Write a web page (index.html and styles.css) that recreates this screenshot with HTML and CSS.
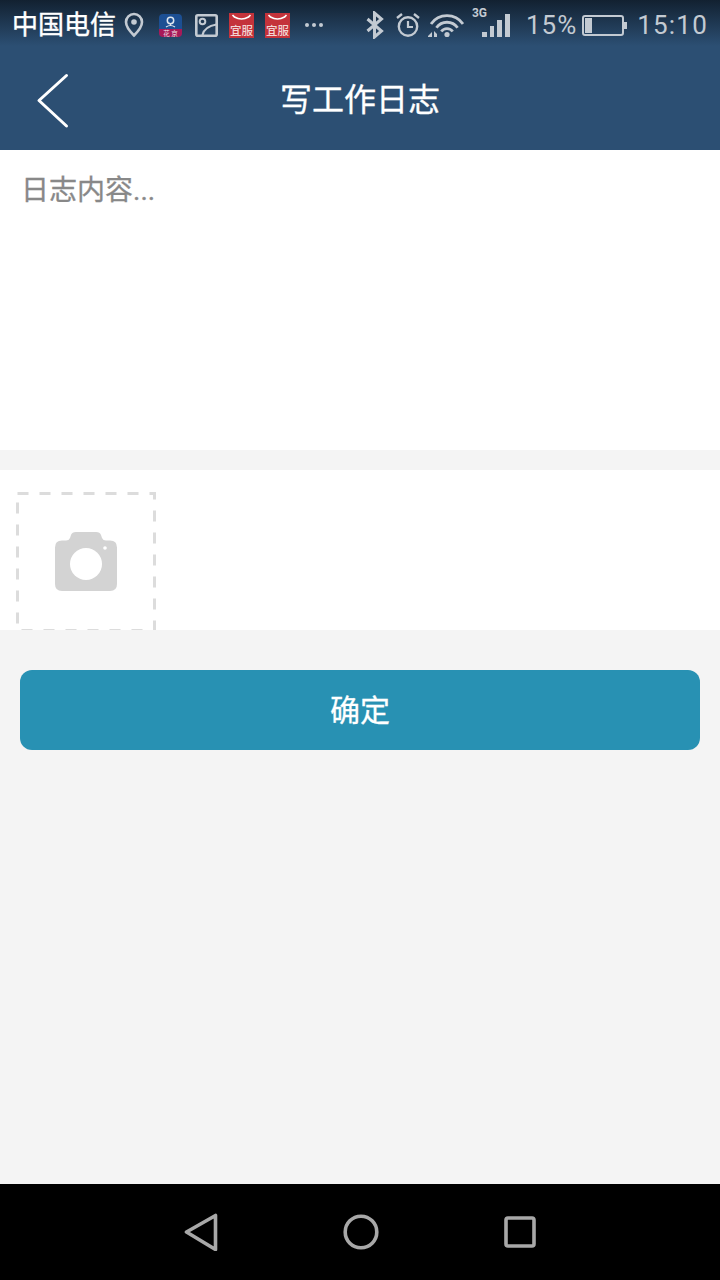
FILE: index.html
```html
<!DOCTYPE html>
<html lang="zh-CN">
<head>
  <meta charset="UTF-8" />
  <title>写工作日志</title>
  <link rel="stylesheet" href="styles.css">
</head>
<body>
  <div class="screen">
    <header class="top">
      <div class="status">
        <div class="status-left">
          <span class="carrier">中国电信</span>
          <svg class="ic-pin" width="20" height="26" viewBox="0 0 20 26"><path d="M10 2a8 8 0 0 0-8 8c0 5.500 8 13.500 8 13.500s8-8 8-13.500a8 8 0 0 0-8-8z" fill="none" stroke="#c3cad2" stroke-width="2.600"/><circle cx="10" cy="10" r="2.800" fill="#c3cad2"/></svg>
          <svg class="ic-app" width="23" height="23" viewBox="0 0 23 23"><rect width="23" height="23" rx="4" fill="#1c4f93"/><path d="M0 15h23v4a4 4 0 0 1-4 4H4a4 4 0 0 1-4-4z" fill="#a81a58"/><circle cx="11.500" cy="6.500" r="3.200" fill="none" stroke="#dfe6ee" stroke-width="1.500"/><path d="M7 13q4.500-3 9 0M11.500 9.500v2.500" fill="none" stroke="#dfe6ee" stroke-width="1.200"/><text x="11.500" y="21.500" class="app-label">花 京</text></svg>
          <svg class="ic-img" width="23" height="23" viewBox="0 0 23 23"><rect x="1.300" y="1.300" width="20.400" height="20.400" rx="1.500" fill="none" stroke="#c3cad2" stroke-width="2.600"/><circle cx="7.500" cy="7.500" r="2.800" fill="none" stroke="#c3cad2" stroke-width="2"/><path d="M7.500 21q2-8.500 14-10.500" fill="none" stroke="#c3cad2" stroke-width="2.200"/></svg>
          <span class="shop"><svg width="25" height="12" viewBox="0 0 25 12"><path d="M3.500 2q1 1 2 2 7 4 14 0 1-1 2-2" fill="none" stroke="#fff" stroke-width="1.700"/></svg><i>宜服</i></span>
          <span class="shop"><svg width="25" height="12" viewBox="0 0 25 12"><path d="M3.500 2q1 1 2 2 7 4 14 0 1-1 2-2" fill="none" stroke="#fff" stroke-width="1.700"/></svg><i>宜服</i></span>
          <span class="more"><b></b><b></b><b></b></span>
        </div>
        <div class="status-right">
          <svg class="ic-bt" width="20" height="28" viewBox="0 0 20 28"><path d="M2.500 8l14 12L9.500 26V2l7 6-14 12" fill="none" stroke="#c3cad2" stroke-width="3"/></svg>
          <svg class="ic-alarm" width="26" height="26" viewBox="0 0 26 26"><circle cx="13" cy="14.500" r="9.200" fill="none" stroke="#c3cad2" stroke-width="2.400"/><path d="M13 9v6h5" fill="none" stroke="#c3cad2" stroke-width="2.200"/><path d="M2 6l5-4M24 6l-5-4" stroke="#c3cad2" stroke-width="2.400"/></svg>
          <svg class="ic-wifi" width="36" height="26" viewBox="0 0 36 26"><path d="M3 12A19.500 19.500 0 0 1 35 12M8.400 15.700A13 13 0 0 1 29.600 15.700M13.300 19.500A7 7 0 0 1 24.700 19.500" fill="none" stroke="#c3cad2" stroke-width="2.800"/><circle cx="19" cy="22.500" r="2.600" fill="#c3cad2"/><path d="M0 24l4-4v5H0zM6 19l3 3v3H6z" fill="#c3cad2"/></svg>
          <span class="signal">
            <em>3G</em>
            <b class="b1"></b><b class="b2"></b><b class="b3"></b><b class="b4"></b>
          </span>
          <span class="pct">15%</span>
          <span class="battery"><span class="level"></span></span>
          <span class="clock">15:10</span>
        </div>
      </div>
      <div class="titlebar">
        <svg class="back" width="38" height="56" viewBox="0 0 38 56"><path d="M33.500 2.500L6 27.500 33.500 53" fill="none" stroke="#fff" stroke-width="3" stroke-linecap="round" stroke-linejoin="round"/></svg>
        <h1>写工作日志</h1>
      </div>
    </header>

    <main class="content">
      <div class="log-text">日志内容...</div>
      <div class="photos">
        <div class="add-photo">
          <svg class="dash" width="140" height="140" viewBox="0 0 140 140"><rect x="1.500" y="1.500" width="137" height="137" fill="none" stroke="#dcdcdc" stroke-width="3" stroke-dasharray="11 11"/></svg>
          <svg class="camera" width="62" height="60" viewBox="0 0 62 60"><path d="M7 8.500h4q3 0 4-2.500l1-3q1-3 5-3h20q4 0 5 3l1 3q1 2.500 4 2.500h4q7 0 7 7V52q0 7-7 7H7q-7 0-7-7V15.500q0-7 7-7z" fill="#d3d3d3"/><circle cx="31" cy="32" r="16" fill="#fff"/><circle cx="50" cy="16" r="1.800" fill="#fff"/></svg>
        </div>
      </div>
      <div class="actions">
        <button class="ok">确定</button>
      </div>
    </main>

    <nav class="navbar">
      <svg width="34" height="38" viewBox="0 0 34 38"><path d="M2.500 19L31.500 2.500v34z" fill="none" stroke="#a8a8a8" stroke-width="3.600" stroke-linejoin="round"/></svg>
      <svg width="36" height="36" viewBox="0 0 36 36"><circle cx="18" cy="18" r="15.800" fill="none" stroke="#a8a8a8" stroke-width="3.600"/></svg>
      <svg width="32" height="32" viewBox="0 0 32 32"><rect x="2" y="2" width="28" height="28" rx="2" fill="none" stroke="#a8a8a8" stroke-width="3.600"/></svg>
    </nav>
  </div>
</body>
</html>
```

FILE: styles.css
```css
* {
  box-sizing: border-box;
}

body {
  margin: 0;
  background: #f4f4f4;
  font-family: "Roboto", "Noto Sans CJK SC", sans-serif;
}

.screen {
  width: 720px;
  height: 1280px;
  display: flex;
  flex-direction: column;
  overflow: hidden;
}

.top {
  height: 150px;
  background: linear-gradient(#122131 0, #2c4f73 46px, #2c4f73 100%);
}

.status {
  height: 50px;
  display: flex;
  justify-content: space-between;
  align-items: center;
  padding: 0 12px 0 12px;
  color: #c3cad2;
}

.status-left, .status-right {
  display: flex;
  align-items: center;
}

.carrier {
  width: 112px;
  font-size: 26px;
  color: #fff;
  -webkit-text-stroke: 0.4px #fff;
  margin-bottom: 6px;
  white-space: nowrap;
}

.app-label {
  font-size: 6.500px;
  fill: #f0e6ec;
  text-anchor: middle;
}

.ic-app {
  margin-left: 15px;
}

.ic-img {
  margin-left: 13px;
}

.shop {
  width: 25px;
  height: 25px;
  margin-left: 11px;
  background: #c4333b;
  color: #f1d5d5;
  display: flex;
  flex-direction: column;
  align-items: center;
  overflow: hidden;
}

.shop svg {
  flex: none;
}

.shop i {
  font-style: normal;
  font-weight: 500;
  font-size: 11.500px;
  line-height: 12px;
}

.more {
  display: flex;
  gap: 3px;
  margin-left: 15px;
}

.more b {
  width: 4px;
  height: 4px;
  border-radius: 50%;
  background: #c3cad2;
}

.ic-bt {
  margin-right: 10px;
}

.ic-alarm {
  margin-right: 7px;
}

.ic-wifi {
  margin-right: 8px;
}

.signal {
  width: 38px;
  height: 30px;
  display: flex;
  align-items: flex-end;
  gap: 3px;
  position: relative;
  padding-left: 10px;
  margin-bottom: 7px;
}

.signal em {
  position: absolute;
  left: 0;
  top: -1px;
  font-style: normal;
  font-weight: 700;
  font-size: 12px;
  line-height: 14px;
}

.signal b {
  width: 5px;
  background: #c3cad2;
}

.b1 { height: 5px; }
.b2 { height: 11px; }
.b3 { height: 17px; }
.b4 { height: 23px; }

.pct {
  font-size: 26px;
  margin-left: 16px;
  letter-spacing: 1px;
}

.battery {
  width: 42px;
  height: 21px;
  margin-left: 5px;
  margin-right: 3px;
  border: 2px solid #c3cad2;
  border-radius: 3px;
  padding: 1px;
  position: relative;
}

.battery::after {
  content: "";
  position: absolute;
  right: -5px;
  top: 5px;
  width: 3px;
  height: 7px;
  background: #c3cad2;
}

.level {
  display: block;
  width: 7px;
  height: 100%;
  background: #c3cad2;
}

.clock {
  font-size: 26px;
  margin-left: 10px;
  letter-spacing: 1.200px;
}

.titlebar {
  height: 100px;
  display: flex;
  align-items: center;
  justify-content: center;
  position: relative;
}

.back {
  position: absolute;
  left: 33px;
  top: 23px;
}

h1 {
  margin: 0 0 6px;
  font-size: 32px;
  font-weight: 400;
  -webkit-text-stroke: 0.3px #fff;
  color: #fff;
}

.content {
  flex: 1;
}

.log-text {
  height: 300px;
  background: #fff;
  padding: 20px 21px;
  font-size: 28px;
  -webkit-text-stroke: 0.3px #888;
  line-height: 42px;
  color: #888;
}

.photos {
  height: 160px;
  margin-top: 20px;
  background: #fff;
  padding: 22px 16px 0;
  overflow: hidden;
}

.add-photo {
  width: 140px;
  height: 138px;
  position: relative;
  display: flex;
  align-items: center;
  justify-content: center;
}

.dash {
  position: absolute;
  left: 0;
  top: 0;
}

.camera {
  margin-top: 2px;
}

.actions {
  padding: 40px 20px 0;
}

.ok {
  display: block;
  width: 100%;
  height: 80px;
  border: none;
  border-radius: 12px;
  background: #2891b3;
  color: #fff;
  -webkit-text-stroke: 0.3px #fff;
  font-family: inherit;
  font-size: 30px;
  padding: 0 0 4px;
}

.navbar {
  height: 96px;
  background: #000;
  display: flex;
  align-items: center;
  padding-left: 184px;
  gap: 125px;
}
```
